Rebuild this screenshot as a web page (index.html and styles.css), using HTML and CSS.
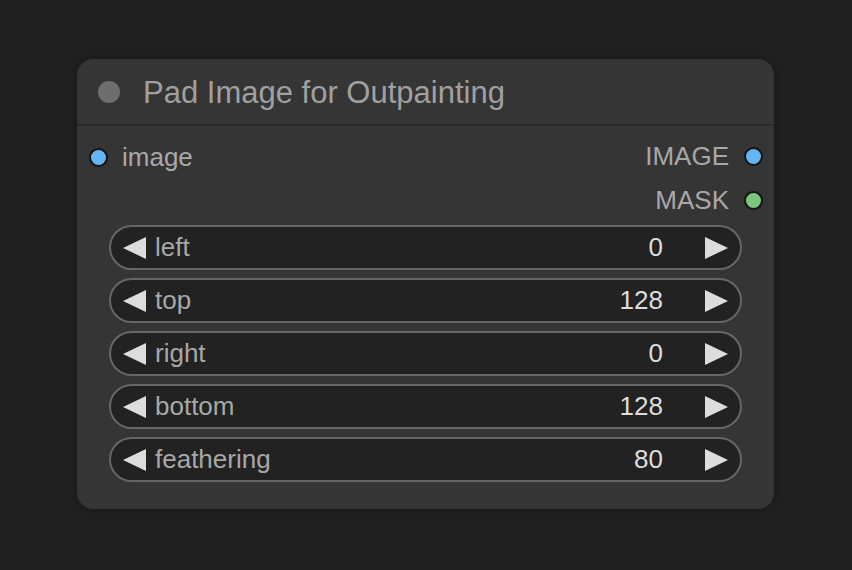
FILE: index.html
```html
<!DOCTYPE html>
<html>
<head>
<meta charset="utf-8">
<link rel="stylesheet" href="styles.css">
</head>
<body>
<div class="node">
  <div class="title">
    <span class="title-dot"></span>
    <span class="title-text">Pad Image for Outpainting</span>
  </div>
  <div class="slots">
    <div class="inputs">
      <div class="slot in"><span class="dot blue"></span><span>image</span></div>
    </div>
    <div class="outputs">
      <div class="slot out"><span>IMAGE</span><span class="dot blue"></span></div>
      <div class="slot out"><span>MASK</span><span class="dot green"></span></div>
    </div>
  </div>
  <div class="widgets">
    <div class="widget">
      <svg class="arrow" viewBox="0 0 23 22"><polygon points="0,11 23,0 23,22"/></svg>
      <span class="label">left</span><span class="value">0</span>
      <svg class="arrow" viewBox="0 0 23 22"><polygon points="23,11 0,0 0,22"/></svg>
    </div>
    <div class="widget">
      <svg class="arrow" viewBox="0 0 23 22"><polygon points="0,11 23,0 23,22"/></svg>
      <span class="label">top</span><span class="value">128</span>
      <svg class="arrow" viewBox="0 0 23 22"><polygon points="23,11 0,0 0,22"/></svg>
    </div>
    <div class="widget">
      <svg class="arrow" viewBox="0 0 23 22"><polygon points="0,11 23,0 23,22"/></svg>
      <span class="label">right</span><span class="value">0</span>
      <svg class="arrow" viewBox="0 0 23 22"><polygon points="23,11 0,0 0,22"/></svg>
    </div>
    <div class="widget">
      <svg class="arrow" viewBox="0 0 23 22"><polygon points="0,11 23,0 23,22"/></svg>
      <span class="label">bottom</span><span class="value">128</span>
      <svg class="arrow" viewBox="0 0 23 22"><polygon points="23,11 0,0 0,22"/></svg>
    </div>
    <div class="widget">
      <svg class="arrow" viewBox="0 0 23 22"><polygon points="0,11 23,0 23,22"/></svg>
      <span class="label">feathering</span><span class="value">80</span>
      <svg class="arrow" viewBox="0 0 23 22"><polygon points="23,11 0,0 0,22"/></svg>
    </div>
  </div>
</div>
</body>
</html>
```
FILE: styles.css
```css
* { box-sizing: border-box; }
html, body { margin: 0; padding: 0; }
body {
  background: #202020;
  width: 852px;
  height: 570px;
  padding: 59px 0 0 77px;
  font-family: "Liberation Sans", Arial, sans-serif;
}
.node {
  width: 697px;
  height: 450px;
  background: #353535;
  border-radius: 16px;
  box-shadow: 0 0 6px rgba(0,0,0,0.35);
  display: flex;
  flex-direction: column;
}
.title {
  height: 67px;
  display: flex;
  align-items: center;
  padding-left: 21px;
  border-bottom: 2px solid #2a2a2a;
}
.title-dot {
  width: 22px;
  height: 22px;
  border-radius: 50%;
  background: #6e6e6e;
  margin-right: 23px;
}
.title-text {
  font-size: 31px;
  color: #a0a0a0;
  line-height: 1;
  padding-top: 1px;
}
.slots {
  display: flex;
  justify-content: space-between;
  padding: 8px 11px 0 12px;
}
.outputs {
  display: flex;
  flex-direction: column;
  align-items: flex-end;
}
.slot {
  height: 44px;
  display: flex;
  align-items: center;
  font-size: 26px;
  color: #a8a8a8;
  gap: 14px;
}
.out { gap: 15px; }
.in { margin-top: 1px; }
.dot {
  width: 19px;
  height: 19px;
  border-radius: 50%;
  border: 2px solid #151515;
}
.blue { background: #64b5f6; }
.green { background: #7cc77d; }
.widgets {
  display: flex;
  flex-direction: column;
  gap: 8px;
  padding: 3px 32px 0 32px;
}
.widget {
  height: 45px;
  border: 2px solid #666;
  border-radius: 23px;
  background: #222;
  display: flex;
  align-items: center;
  padding: 0 12px 0 12px;
}
.arrow {
  width: 23px;
  height: 22px;
  fill: #dddddd;
  flex: none;
}
.label {
  flex: 1;
  font-size: 26px;
  color: #a8a8a8;
  margin-left: 9px;
}
.value {
  font-size: 26px;
  color: #dddddd;
  margin-right: 42px;
}
```
